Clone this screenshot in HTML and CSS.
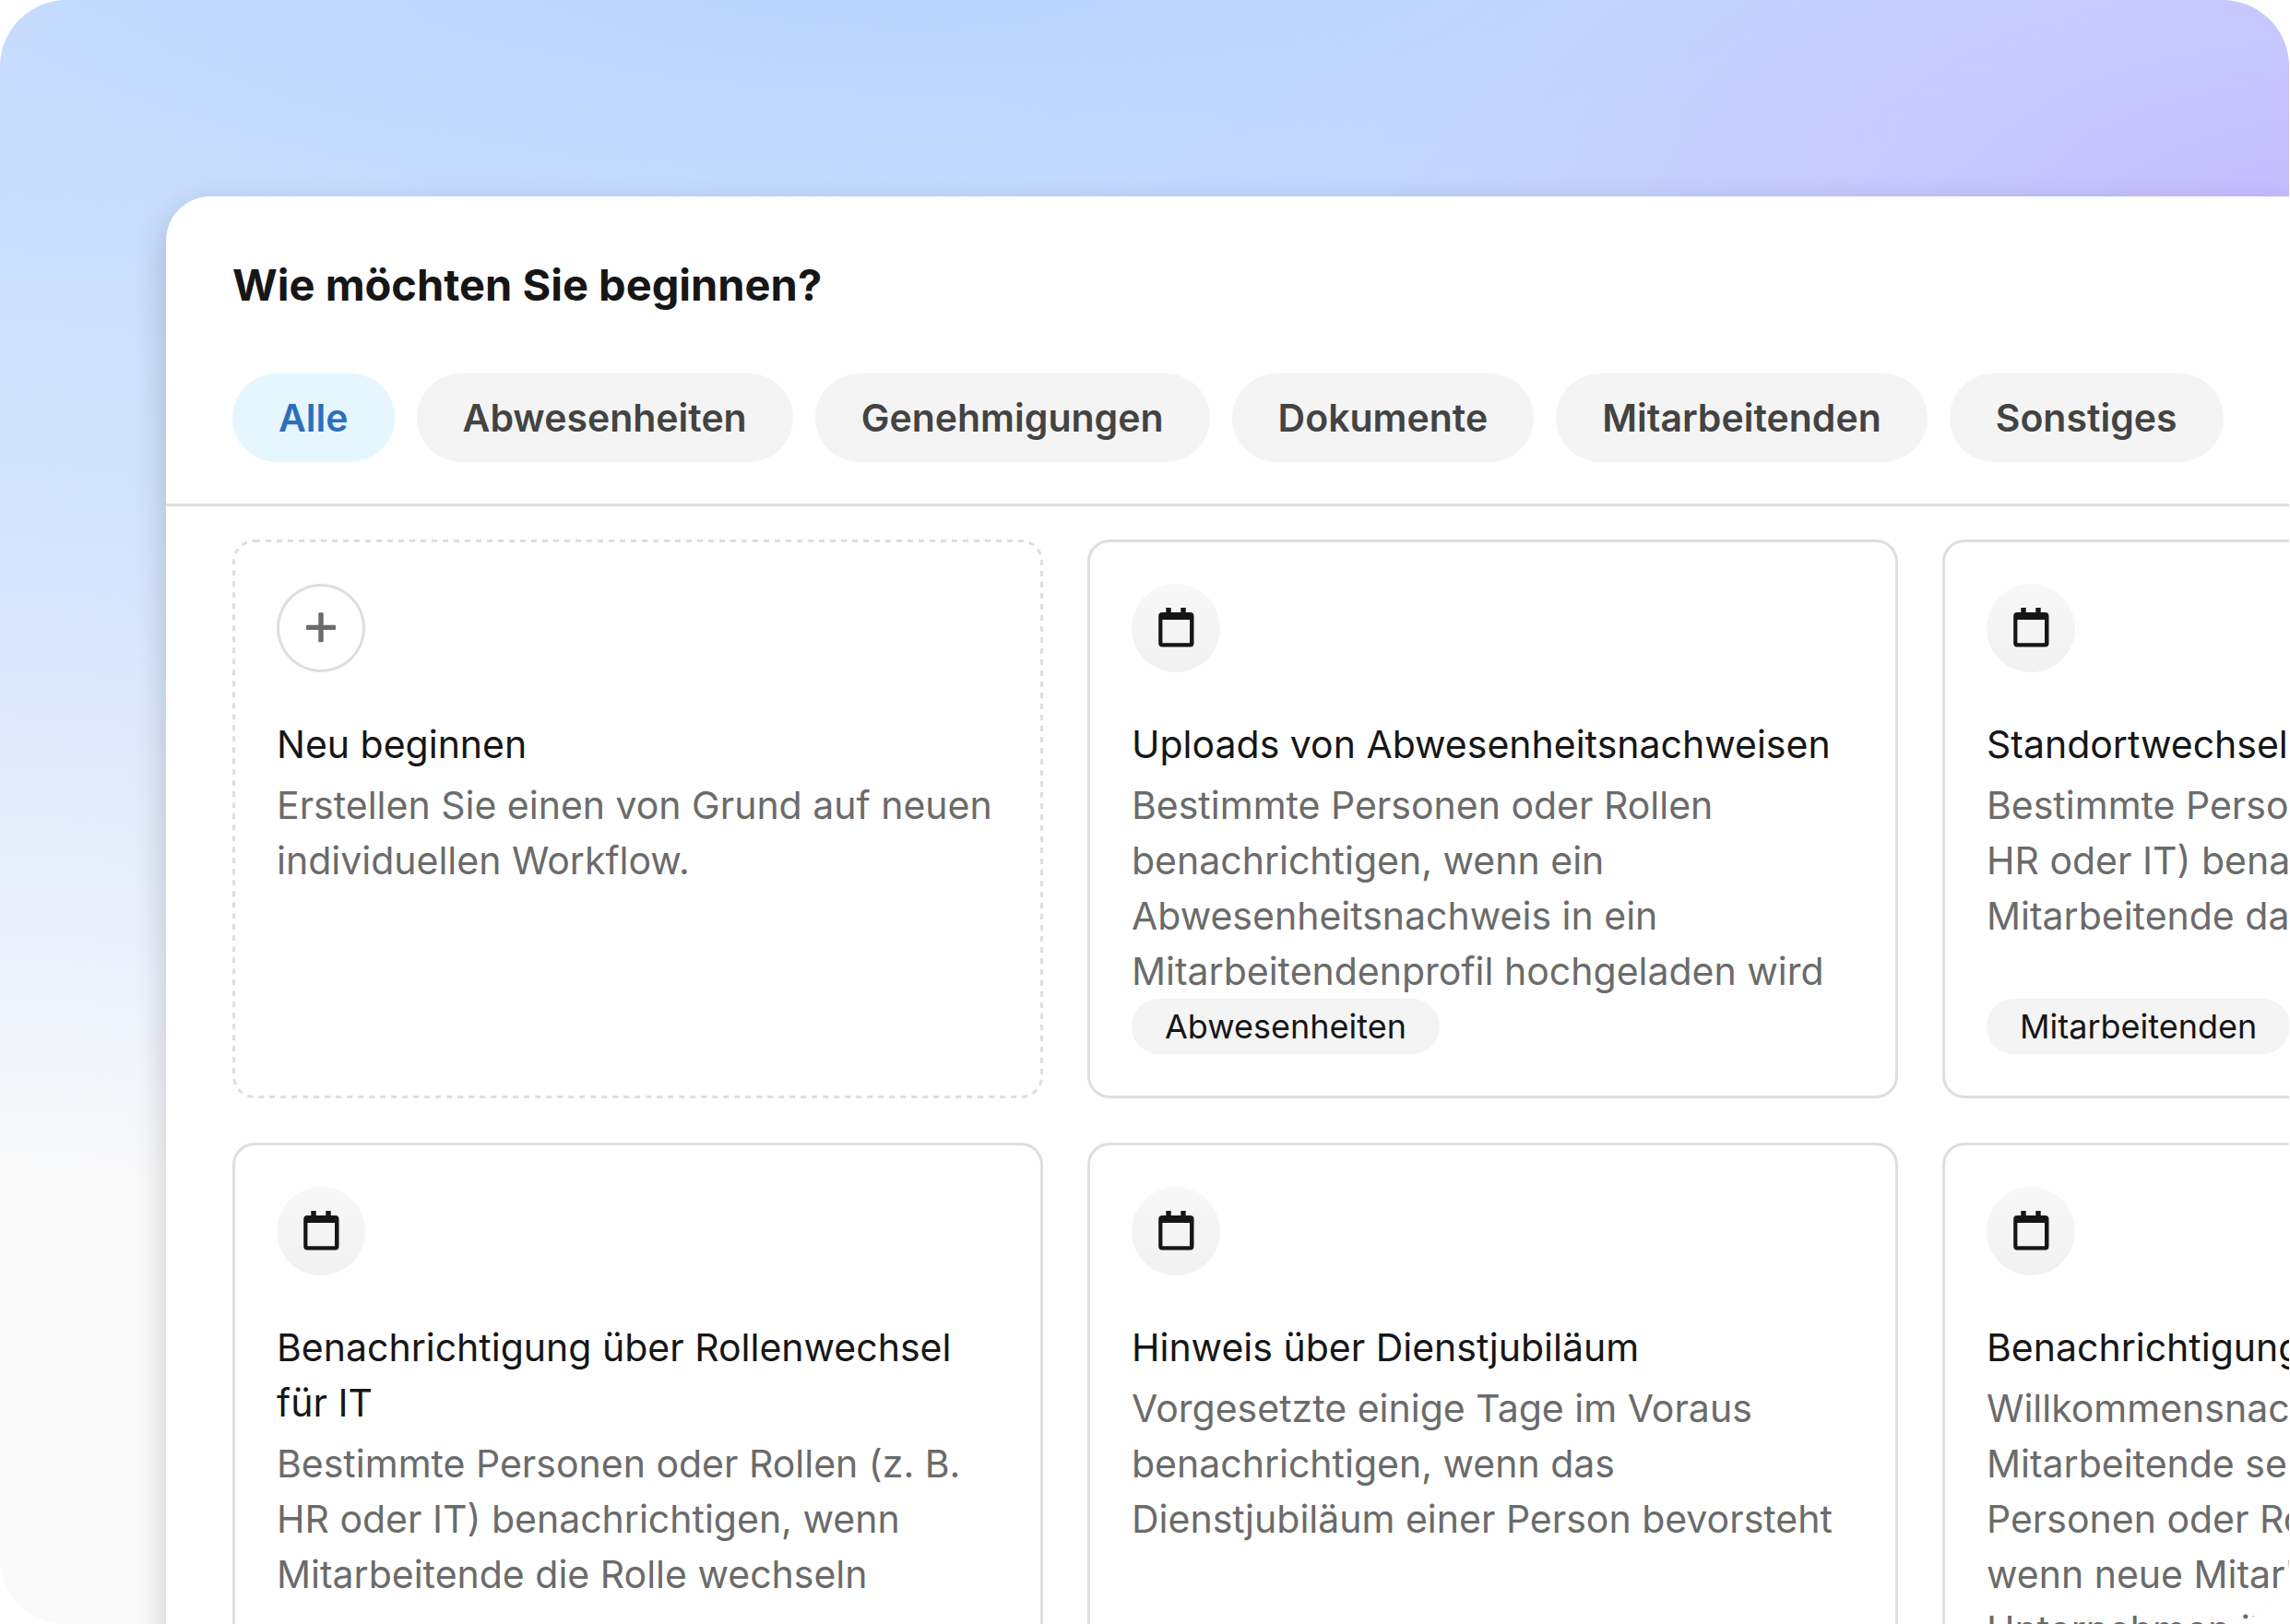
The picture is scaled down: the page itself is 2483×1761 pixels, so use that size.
FILE: index.html
```html
<!DOCTYPE html>
<html lang="de">
<head>
<meta charset="utf-8">
<title>Workflow-Vorlagen</title>
<link rel="stylesheet" href="styles.css">
</head>
<body>
<svg class="sprite" aria-hidden="true">
  <symbol id="calendar" viewBox="0 0 96 96">
    <path fill-rule="evenodd" d="M37.300 26h5.400v5h10.600v-5h5.400v5H63.500a4 4 0 0 1 4 4V64.500a4 4 0 0 1-4 4H33.200a4 4 0 0 1-4-4V35a4 4 0 0 1 4-4h4.100zM33.400 39v25.200h29.600V39z"/>
  </symbol>
  <symbol id="plus" viewBox="0 0 96 96">
    <path d="M33 44.700h30a1 1 0 0 1 1 1v3.300a1 1 0 0 1-1 1H33a1 1 0 0 1-1-1v-3.300a1 1 0 0 1 1-1zM46.300 31.300h3.400a1 1 0 0 1 1 1v30a1 1 0 0 1-1 1h-3.400a1 1 0 0 1-1-1v-30a1 1 0 0 1 1-1z" fill="#6b6b6a"/>
  </symbol>
</svg>
<div class="stage">
  <main class="panel">
    <header class="panel-header">
      <h1 class="panel-title">Wie möchten Sie beginnen?</h1>
      <nav class="filters" aria-label="Kategorien">
        <button class="filter filter-active" type="button">Alle</button>
        <button class="filter" type="button">Abwesenheiten</button>
        <button class="filter" type="button">Genehmigungen</button>
        <button class="filter" type="button">Dokumente</button>
        <button class="filter" type="button">Mitarbeitenden</button>
        <button class="filter" type="button">Sonstiges</button>
      </nav>
    </header>
    <section class="cards">
      <article class="card card-new">
        <svg class="dashes" aria-hidden="true"><rect class="dashes-line" x="1.5" y="1.5" rx="22.5"/></svg>
        <span class="badge badge-outline"><svg class="glyph"><use href="#plus"/></svg></span>
        <h2 class="card-title">Neu beginnen</h2>
        <p class="card-text">Erstellen Sie einen von Grund auf neuen individuellen Workflow.</p>
      </article>
      <article class="card">
        <span class="badge"><svg class="glyph"><use href="#calendar"/></svg></span>
        <h2 class="card-title">Uploads von Abwesenheitsnachweisen</h2>
        <p class="card-text">Bestimmte Personen oder Rollen benachrichtigen, wenn ein Abwesenheitsnachweis in ein Mitarbeitendenprofil hochgeladen wird<br>.</p>
        <span class="tag">Abwesenheiten</span>
      </article>
      <article class="card">
        <span class="badge"><svg class="glyph"><use href="#calendar"/></svg></span>
        <h2 class="card-title">Standortwechsel</h2>
        <p class="card-text">Bestimmte Personen oder Rollen (z. B. HR oder IT) benachrichtigen, wenn Mitarbeitende das Büro wechseln</p>
        <span class="tag">Mitarbeitenden</span>
      </article>
      <article class="card">
        <span class="badge"><svg class="glyph"><use href="#calendar"/></svg></span>
        <h2 class="card-title">Benachrichtigung über Rollenwechsel für IT</h2>
        <p class="card-text">Bestimmte Personen oder Rollen (z. B. HR oder IT) benachrichtigen, wenn Mitarbeitende die Rolle wechseln</p>
      </article>
      <article class="card">
        <span class="badge"><svg class="glyph"><use href="#calendar"/></svg></span>
        <h2 class="card-title">Hinweis über Dienstjubiläum</h2>
        <p class="card-text">Vorgesetzte einige Tage im Voraus benachrichtigen, wenn das Dienstjubiläum einer Person bevorsteht</p>
      </article>
      <article class="card">
        <span class="badge"><svg class="glyph"><use href="#calendar"/></svg></span>
        <h2 class="card-title">Benachrichtigung</h2>
        <p class="card-text">Willkommensnachricht an neue<br>Mitarbeitende senden und<br>Personen oder Rollen informieren,<br>wenn neue Mitarbeitende im<br>Unternehmen ihre Arbeit beginnen</p>
      </article>
    </section>
  </main>
</div>
</body>
</html>
```
FILE: styles.css
```css
* {
  box-sizing: border-box;
}

body {
  margin: 0;
  padding-right: 1px;
  background: #fff;
  color: #161616;
  font-family: Inter, "Liberation Sans", sans-serif;
}

.sprite {
  position: absolute;
  width: 0;
  height: 0;
}

/* Rounded backdrop that clips the panel at its right and bottom edges */
.stage {
  height: 100vh;
  padding: 213px 0 0 180px;
  overflow: hidden;
  border-radius: 72px;
  background:
    radial-gradient(ellipse 1500px 700px at 102% 14%, #c6bbff 0%, rgba(198, 195, 255, 0.8) 30%, rgba(194, 208, 255, 0.5) 65%, rgba(194, 208, 255, 0) 100%),
    radial-gradient(ellipse 1100px 340px at 40% -4%, #b3d3ff 0%, rgba(184, 213, 255, 0.8) 35%, rgba(194, 216, 255, 0) 100%),
    linear-gradient(184deg, #c5dafe 0, #c9defe 400px, #d4e4fd 740px, #e5edfb 1080px, #f5f7fb 1360px, #fafafa 1450px);
}

.panel {
  min-height: 100%;
  border-top-left-radius: 48px;
  background: #fff;
  box-shadow: 0 12px 36px rgba(0, 0, 0, 0.2);
}

.panel-header {
  padding: 60px 72px 45px;
  border-bottom: 3px solid #dededd;
}

.panel-title {
  margin: 0 0 60px;
  font-size: 47px;
  font-weight: 700;
  line-height: 72px;
}

.filters {
  display: flex;
  gap: 24px;
}

.filter {
  flex: none;
  height: 96px;
  padding: 0 50px;
  border: 0;
  border-radius: 48px;
  background: #f4f4f4;
  color: #434343;
  font: 600 41px/60px Inter, "Liberation Sans", sans-serif;
}

.filter-active {
  background: #e5f6ff;
  color: #2c6fbb;
}

.cards {
  display: grid;
  grid-template-columns: repeat(3, 879px);
  grid-template-rows: 606px minmax(726px, auto);
  gap: 48px;
  padding: 36px 72px 72px;
}

.card {
  display: flex;
  flex-direction: column;
  align-items: flex-start;
  padding: 45px;
  border: 3px solid #dededd;
  border-radius: 24px;
}

.card-new {
  position: relative;
  border-color: transparent;
}

/* Dashed outline with even 6px dashes and gaps */
.dashes {
  position: absolute;
  top: -3px;
  left: -3px;
  width: calc(100% + 6px);
  height: calc(100% + 6px);
}

.dashes-line {
  width: calc(100% - 3px);
  height: calc(100% - 3px);
  fill: none;
  stroke: #dededd;
  stroke-width: 3px;
  stroke-dasharray: 6 6;
}

.badge {
  display: block;
  flex: none;
  width: 96px;
  height: 96px;
  margin-bottom: 48px;
  border-radius: 50%;
  background: linear-gradient(#f8f8f8, #f1f1f1);
}

.badge-outline {
  background: #fff;
  box-shadow: inset 0 0 0 3px #dededd;
}

.glyph {
  display: block;
  width: 96px;
  height: 96px;
  fill: #161616;
}

.card-title {
  margin: 0 0 6px;
  font-size: 41px;
  font-weight: 400;
  line-height: 60px;
}

.card-text {
  flex: 1 1 0;
  min-height: 0;
  margin: 0;
  color: #6b6b6a;
  font-size: 41px;
  line-height: 60px;
}

.tag {
  position: relative;
  flex: none;
  padding: 0 36px;
  border-radius: 30px;
  background: #f4f4f4;
  font-size: 36px;
  line-height: 60px;
}
```
